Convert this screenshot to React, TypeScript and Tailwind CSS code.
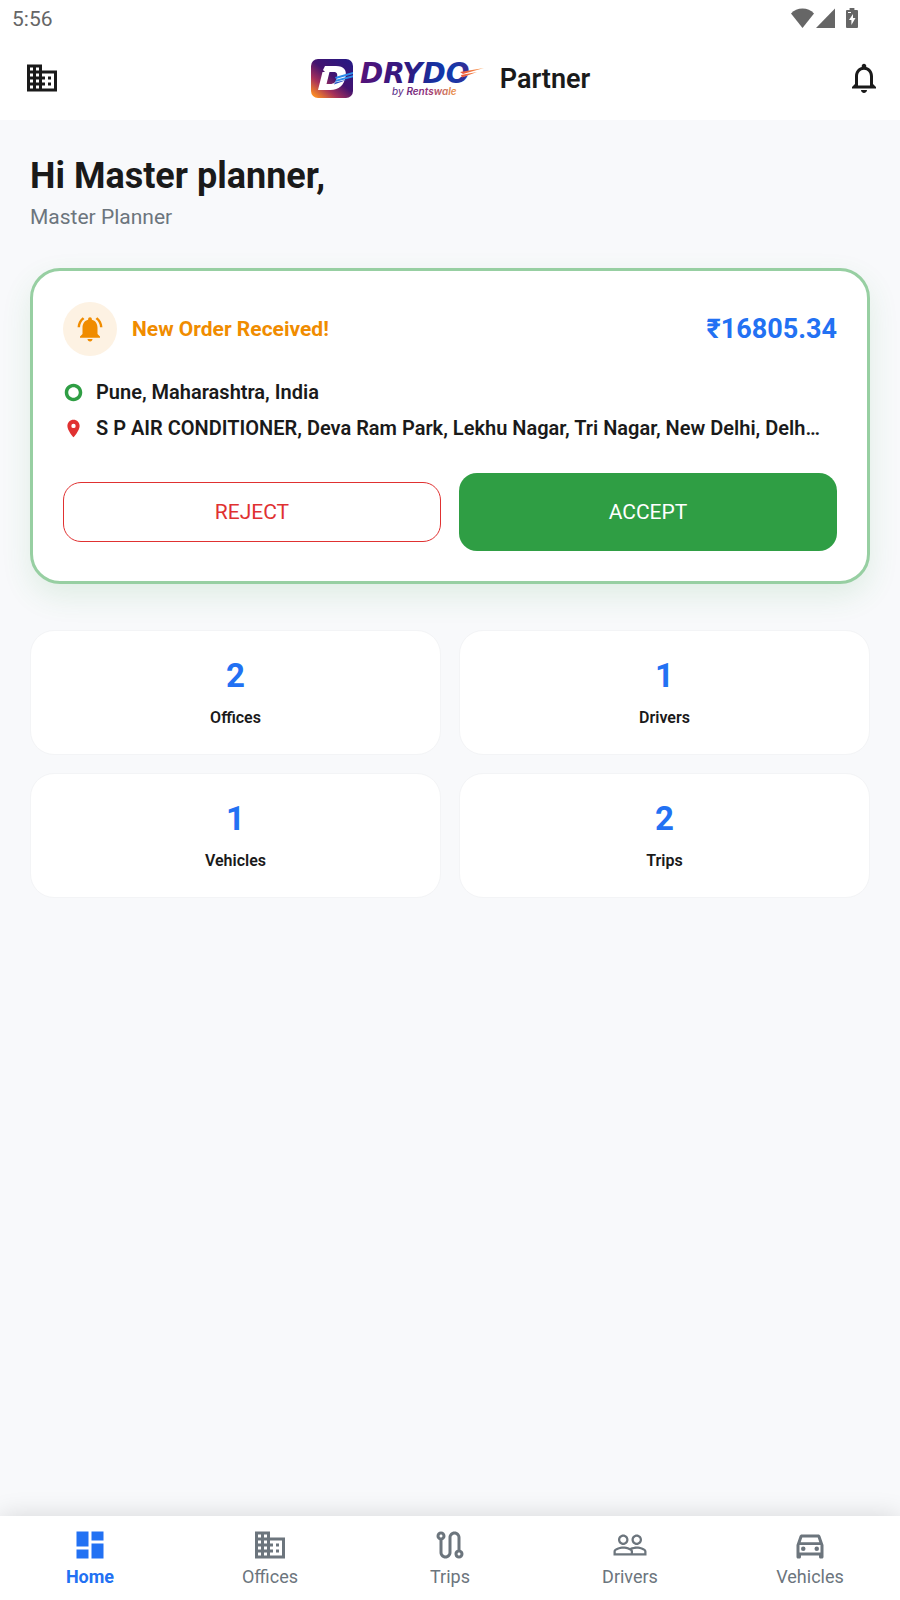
import type { IconType } from "react-icons";
import {
  MdDashboard,
  MdDomain,
  MdLocationOn,
  MdNotificationsActive,
  MdNotificationsNone,
  MdOutlineDirectionsCar,
  MdOutlineRoute,
  MdPeopleOutline,
  MdTripOrigin,
} from "react-icons/md";

interface Stat {
  label: string;
  value: number;
}

interface NavItem {
  label: string;
  icon: IconType;
  active?: boolean;
}

const stats: Stat[] = [
  { label: "Offices", value: 2 },
  { label: "Drivers", value: 1 },
  { label: "Vehicles", value: 1 },
  { label: "Trips", value: 2 },
];

const navItems: NavItem[] = [
  { label: "Home", icon: MdDashboard, active: true },
  { label: "Offices", icon: MdDomain },
  { label: "Trips", icon: MdOutlineRoute },
  { label: "Drivers", icon: MdPeopleOutline },
  { label: "Vehicles", icon: MdOutlineDirectionsCar },
];

const StatusBar: React.FC = () => (
  <div className="flex h-9 items-center justify-between pl-3 pr-[42px] text-[#666]">
    <span className="pt-0.5 text-[21px] leading-6">5:56</span>
    <div className="flex items-center">
      <svg width="23" height="20" viewBox="0 0 23 20" fill="currentColor">
        <path d="M11.5 20 0 5.4C3 2.4 7 .6 11.5.6S20 2.4 23 5.4Z" />
      </svg>
      <svg className="ml-0.5" width="19" height="20" viewBox="0 0 19 20" fill="currentColor">
        <path d="M19 .6V20H0Z" />
      </svg>
      <svg className="ml-[11px]" width="12" height="20" viewBox="0 0 12 20" fill="currentColor">
        <path
          fillRule="evenodd"
          d="M3.6 0h4.8v2H11a1 1 0 0 1 1 1v16a1 1 0 0 1-1 1H1a1 1 0 0 1-1-1V3a1 1 0 0 1 1-1h2.600ZM2 4v1h3V4ZM7 6 3 12H5.400V17L9.500 10H7Z"
        />
      </svg>
    </div>
  </div>
);

const Logo: React.FC = () => (
  <svg width="174" height="44" viewBox="0 0 174 44" role="img" aria-label="DRYDO by Rentswale">
    <defs>
      <linearGradient id="badge" x1="1" y1="0" x2="0.15" y2="1">
        <stop offset="0" stopColor="#241a86" />
        <stop offset="0.5" stopColor="#43136f" />
        <stop offset="0.75" stopColor="#a5305a" />
        <stop offset="1" stopColor="#f98a25" />
      </linearGradient>
      <linearGradient id="word" x1="0" y1="0" x2="1" y2="0">
        <stop offset="0" stopColor="#54137a" />
        <stop offset="0.45" stopColor="#2d1a80" />
        <stop offset="0.8" stopColor="#0d3bb0" />
        <stop offset="1" stopColor="#3a2b90" />
      </linearGradient>
      <linearGradient id="tagline" x1="0" y1="0" x2="1" y2="0">
        <stop offset="0" stopColor="#4a2180" />
        <stop offset="0.55" stopColor="#93307a" />
        <stop offset="1" stopColor="#f29a4a" />
      </linearGradient>
      <linearGradient id="streak" x1="0" y1="0" x2="1" y2="0">
        <stop offset="0" stopColor="#e8503a" />
        <stop offset="1" stopColor="#f9a04b" />
      </linearGradient>
    </defs>
    <rect x="1" y="3" width="42" height="39" rx="7" fill="url(#badge)" />
    <path
      fill="#fff"
      fillRule="evenodd"
      d="M15 10h11c8 0 11 4 9.500 11-1.500 8-6.500 13-15 13H8l4.500-18H15l-2-2ZM19.500 16 16.500 28H20c4 0 6-2 7-6.500.900-3.700-.300-5.500-3.500-5.500Z"
    />
    <path d="m25 21 18-5v2l-17 5ZM26 23.800l17-4.500v2L25 26Z" fill="#2c8bea" />
    <path d="m25 26.500 13-3-14 5Z" fill="#2353c4" />
    <text
      x="50"
      y="27"
      fill="url(#word)"
      fontFamily="'DejaVu Sans', sans-serif"
      fontSize="28"
      fontWeight="700"
      fontStyle="italic"
    >
      DRYDO
    </text>
    <path d="m150 17 24-5-18 8-6 1Z" fill="#fff" />
    <path d="m150 16 24-4-21 6ZM151 19l16-3-15 5.500Z" fill="url(#streak)" />
    <text
      x="82"
      y="39"
      fill="url(#tagline)"
      fontFamily="Inter, sans-serif"
      fontSize="10"
      fontStyle="italic"
    >
      by <tspan fontWeight="600">Rentswale</tspan>
    </text>
  </svg>
);

const Header: React.FC = () => (
  <header className="bg-white">
    <StatusBar />
    <div className="grid h-[84px] grid-cols-[1fr_auto_1fr] items-center px-[18px]">
      <button aria-label="Offices" className="justify-self-start px-1.5">
        <MdDomain size={36} />
      </button>
      <div className="flex items-center gap-4">
        <Logo />
        <h1 className="pt-0.5 text-[27px] leading-8 font-semibold">Partner</h1>
      </div>
      <button aria-label="Notifications" className="justify-self-end">
        <MdNotificationsNone size={36} />
      </button>
    </div>
  </header>
);

const OrderCard: React.FC = () => (
  <section className="mt-[39px] rounded-[30px] border-3 border-[#97cfa2] bg-white px-[30px] pt-[31px] pb-[30px] shadow-[0_12px_30px_rgba(47,158,68,0.12)]">
    <div className="flex items-center justify-between">
      <div className="flex items-center gap-[15px]">
        <div className="flex size-[54px] items-center justify-center rounded-full bg-[#fdf2e3] text-[#f08c00]">
          <MdNotificationsActive size={30} />
        </div>
        <h3 className="text-[21px] leading-6 font-bold text-[#f08c00]">New Order Received!</h3>
      </div>
      <span className="text-[27px] leading-8 font-bold text-[#2271f3]">₹16805.34</span>
    </div>
    <div className="mt-6 flex flex-col gap-3 text-xl leading-6 font-semibold">
      <div className="flex items-center gap-3">
        <MdTripOrigin size={21} className="shrink-0 text-[#2f9e44]" />
        <p>Pune, Maharashtra, India</p>
      </div>
      <div className="flex items-center gap-3">
        <MdLocationOn size={21} className="shrink-0 text-[#e03131]" />
        <p className="truncate">
          S P AIR CONDITIONER, Deva Ram Park, Lekhu Nagar, Tri Nagar, New Delhi, Delh…
        </p>
      </div>
    </div>
    <div className="mt-[33px] grid grid-cols-2 items-center gap-[18px] text-[21px] leading-6">
      <button className="h-[60px] rounded-[18px] border border-[#e03131] text-[#e03131]">
        REJECT
      </button>
      <button className="h-[78px] rounded-[18px] bg-[#2f9e44] text-white">ACCEPT</button>
    </div>
  </section>
);

const StatCard: React.FC<Stat> = ({ label, value }) => (
  <div className="flex h-[125px] flex-col items-center justify-center rounded-3xl border border-[#f3f4f6] bg-white">
    <span className="text-[33px] leading-10 font-bold text-[#2271f3]">{value}</span>
    <span className="mt-2.5 text-base leading-6 font-semibold">{label}</span>
  </div>
);

const BottomNav: React.FC = () => (
  <nav className="z-10 grid h-[84px] grid-cols-5 bg-white shadow-[0_0_24px_rgba(0,0,0,0.14)]">
    {navItems.map(({ label, icon: Icon, active }) => (
      <a
        key={label}
        href="#"
        className={
          active
            ? "flex flex-col items-center pt-[11px] font-bold text-[#2271f3]"
            : "flex flex-col items-center pt-[11px] text-[#6c757d]"
        }
      >
        <Icon size={36} />
        <span className="text-lg leading-7">{label}</span>
      </a>
    ))}
  </nav>
);

export default function App() {
  return (
    <div className="flex min-h-screen flex-col bg-[#f8f9fb] font-[Roboto,sans-serif] text-[#1a1a1a]">
      <Header />
      <main className="flex-1 px-[30px] pt-[35px]">
        <h2 className="text-4xl leading-[42px] font-bold">Hi Master planner,</h2>
        <p className="mt-2 text-[21px] leading-6 text-[#6c757d]">Master Planner</p>
        <OrderCard />
        <div className="mt-[46px] grid grid-cols-2 gap-[18px]">
          {stats.map((stat) => (
            <StatCard key={stat.label} {...stat} />
          ))}
        </div>
      </main>
      <BottomNav />
    </div>
  );
}
